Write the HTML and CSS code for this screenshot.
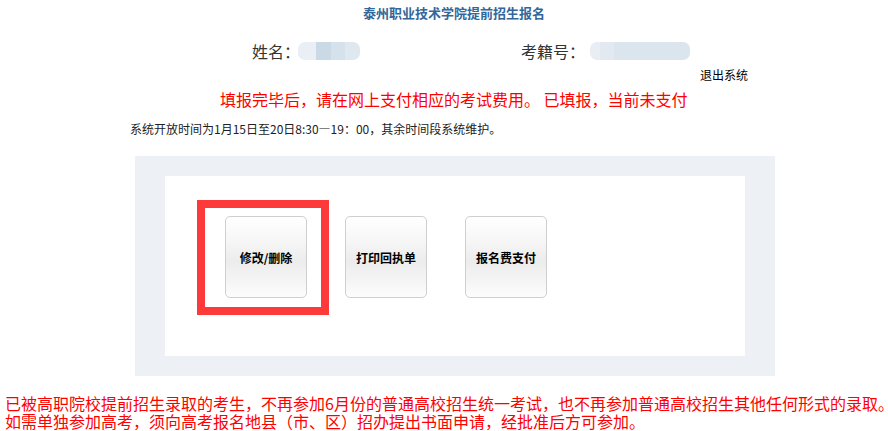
FILE: index.html
```html
<!DOCTYPE html>
<html lang="zh-CN">
<head>
<meta charset="utf-8">
<title>泰州职业技术学院提前招生报名</title>
<link rel="stylesheet" href="styles.css">
</head>
<body>
<div class="page">
  <h1 class="title">泰州职业技术学院提前招生报名</h1>
  <div class="info">
    <div class="field field-name">
      <span class="label">姓名：</span>
      <span class="blur blur-name"></span>
    </div>
    <div class="field">
      <span class="label">考籍号：</span>
      <span class="blur blur-id"></span>
    </div>
  </div>
  <div class="logout">退出系统</div>
  <div class="notice">填报完毕后，请在网上支付相应的考试费用。 已填报，当前未支付</div>
  <div class="time">系统开放时间为1月15日至20日8:30—19：00，其余时间段系统维护。</div>
  <div class="panel">
    <div class="panel-inner">
      <div class="btn-row">
        <div class="btn">修改/删除</div>
        <div class="btn">打印回执单</div>
        <div class="btn">报名费支付</div>
      </div>
      <div class="highlight"></div>
    </div>
  </div>
  <div class="footer">
    <p class="footer-line">已被高职院校提前招生录取的考生，不再参加6月份的普通高校招生统一考试，也不再参加普通高校招生其他任何形式的录取。</p>
    <p class="footer-line">如需单独参加高考，须向高考报名地县（市、区）招办提出书面申请，经批准后方可参加。</p>
  </div>
</div>
</body>
</html>
```
FILE: styles.css
```css
* { box-sizing: border-box; }
html, body { margin: 0; padding: 0; background: #fff; }
body {
  font-family: "Noto Sans CJK SC", "Liberation Sans", sans-serif;
  color: #000;
}
.page { padding-top: 4px; width: 888px; }
.title {
  margin: 0;
  font-size: 13px;
  font-weight: bold;
  color: #336699;
  text-align: center;
  padding-left: 20px;
  line-height: 18px;
}
.info {
  display: flex;
  align-items: center;
  padding-left: 252px;
  margin-top: 19px;
  height: 20px;
}
.field { display: flex; align-items: center; }
.field-name { width: 269px; }
.label { font-size: 16px; line-height: 20px; color: #333; }
.blur {
  display: block;
  height: 18px;
  border-radius: 7px;
  filter: blur(0.6px);
}
.blur-name {
  width: 62px;
  margin-left: -2px;
  background: linear-gradient(to right, #e9eff5 0 29%, #c9d9e5 29% 53%, #d6e2eb 53% 76%, #dfe7ef 76% 100%);
}
.blur-id {
  width: 100px;
  margin-left: 5px;
  background: linear-gradient(to right, #e8eef4 0 10%, #e2e9f0 10% 24%, #dae5ee 24% 100%);
}
.logout {
  font-size: 12px;
  line-height: 16px;
  padding-left: 700px;
  margin-top: 6px;
}
.notice {
  font-size: 16px;
  line-height: 20px;
  color: #ff0000;
  padding-left: 220px;
  margin-top: 6px;
  white-space: pre;
}
.time {
  font-size: 12px;
  line-height: 16px;
  color: #222;
  padding-left: 130px;
  margin-top: 12px;
}
.panel {
  margin-top: 19px;
  margin-left: 135px;
  width: 640px;
  height: 220px;
  background: #edf1f5;
  padding: 20px 30px;
}
.panel-inner {
  position: relative;
  background: #fff;
  height: 180px;
  padding: 40px 60px;
}
.btn-row { display: flex; gap: 38px; }
.btn {
  width: 82px;
  height: 82px;
  border: 1px solid #cfcfcf;
  border-radius: 5px;
  background: linear-gradient(to bottom, #ffffff 0%, #f6f6f6 30%, #ececec 55%, #f3f3f3 75%, #fcfcfc 100%);
  display: flex;
  align-items: center;
  justify-content: center;
  font-size: 12px;
  font-weight: bold;
  color: #000;
}
.highlight {
  position: absolute;
  left: 32px;
  top: 24px;
  width: 132px;
  height: 115px;
  border: 8px solid #fd3a3a;
}
.footer {
  margin-top: 18px;
  padding-left: 5px;
  color: #ff0000;
}
.footer-line {
  margin: 0;
  font-size: 16px;
  line-height: 18px;
  white-space: nowrap;
}
```
